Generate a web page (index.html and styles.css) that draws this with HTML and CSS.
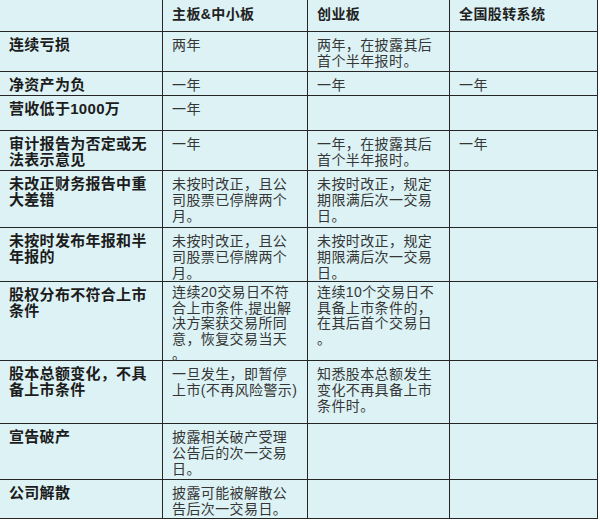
FILE: index.html
```html
<!DOCTYPE html>
<html lang="zh-CN">
<head>
<meta charset="utf-8">
<title>退市条件对比</title>
<link rel="stylesheet" href="styles.css">
</head>
<body>
<div class="table">
  <div class="cell head"></div>
  <div class="cell head">主板&amp;中小板</div>
  <div class="cell head">创业板</div>
  <div class="cell head">全国股转系统</div>

  <div class="cell key">连续亏损</div>
  <div class="cell">两年</div>
  <div class="cell">两年，在披露其后<br>首个半年报时。</div>
  <div class="cell"></div>

  <div class="cell key">净资产为负</div>
  <div class="cell">一年</div>
  <div class="cell">一年</div>
  <div class="cell">一年</div>

  <div class="cell key">营收低于1000万</div>
  <div class="cell">一年</div>
  <div class="cell"></div>
  <div class="cell"></div>

  <div class="cell key">审计报告为否定或无<br>法表示意见</div>
  <div class="cell">一年</div>
  <div class="cell">一年，在披露其后<br>首个半年报时。</div>
  <div class="cell">一年</div>

  <div class="cell key">未改正财务报告中重<br>大差错</div>
  <div class="cell">未按时改正，且公<br>司股票已停牌两个<br>月。</div>
  <div class="cell">未按时改正，规定<br>期限满后次一交易<br>日。</div>
  <div class="cell"></div>

  <div class="cell key">未按时发布年报和半<br>年报的</div>
  <div class="cell">未按时改正，且公<br>司股票已停牌两个<br>月。</div>
  <div class="cell">未按时改正，规定<br>期限满后次一交易<br>日。</div>
  <div class="cell"></div>

  <div class="cell key">股权分布不符合上市<br>条件</div>
  <div class="cell tight">连续20交易日不符<br>合上市条件,提出解<br>决方案获交易所同<br>意，恢复交易当天<br>。</div>
  <div class="cell tight">连续10个交易日不<br>具备上市条件的，<br>在其后首个交易日<br>。</div>
  <div class="cell"></div>

  <div class="cell key">股本总额变化，不具<br>备上市条件</div>
  <div class="cell">一旦发生，即暂停<br>上市(不再风险警示)</div>
  <div class="cell">知悉股本总额发生<br>变化不再具备上市<br>条件时。</div>
  <div class="cell"></div>

  <div class="cell key">宣告破产</div>
  <div class="cell">披露相关破产受理<br>公告后的次一交易<br>日。</div>
  <div class="cell"></div>
  <div class="cell"></div>

  <div class="cell key">公司解散</div>
  <div class="cell">披露可能被解散公<br>告后次一交易日。</div>
  <div class="cell"></div>
  <div class="cell"></div>
</div>
</body>
</html>
```

FILE: styles.css
```css
html, body {
  margin: 0;
  padding: 0;
  background: #ffffff;
}

.table {
  display: grid;
  width: 598px;
  grid-template-columns: 163px 145px 142px 148px;
  grid-template-rows: 32px 40px 24px 35px 40px 57px 54px 79px 63px 56px 39px;
  background: #dcf2f4;
  font-family: "Liberation Sans", "Noto Sans CJK SC", sans-serif;
  font-size: 14px;
  line-height: 16px;
  letter-spacing: 0.4px;
  color: #363636;
}

.cell {
  box-sizing: border-box;
  border-right: 1px solid #262626;
  border-bottom: 1px solid #262626;
  padding: 5px 4px 0 9px;
  white-space: nowrap;
  overflow: visible;
  min-width: 0;
}

.tight {
  padding-top: 3px;
  line-height: 15.5px;
}

.head {
  font-weight: bold;
  color: #222222;
  padding-top: 6px;
}

.key {
  font-weight: bold;
  font-size: 15px;
  letter-spacing: 0.3px;
  color: #1c1c1c;
}
```
